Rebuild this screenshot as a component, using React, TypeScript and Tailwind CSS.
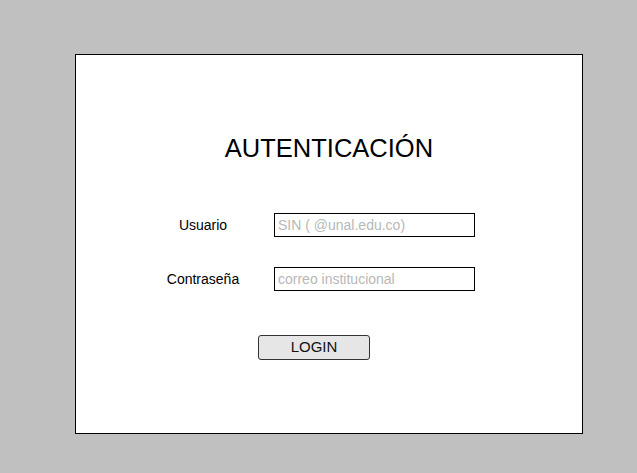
const fields = [
  { label: "Usuario", placeholder: "SIN ( @unal.edu.co)" },
  { label: "Contraseña", placeholder: "correo institucional" },
];

const App = () => {
  return (
    <div className="min-h-screen w-full bg-[#c0c0c0] pt-[54px] pl-[75px] font-['Liberation_Sans',Arial,sans-serif]">
      <div className="w-[508px] h-[380px] border border-black bg-white">
        {/* Title */}
        <h1 className="pt-[81px] text-center text-[25.5px] leading-none text-black">
          AUTENTICACIÓN
        </h1>

        {/* Form rows */}
        <div className="mt-[51px] ml-[72px] flex flex-col gap-[30px]">
          {fields.map((field) => (
            <div key={field.label} className="flex items-center gap-4">
              <label className="w-[110px] text-center text-[14px] leading-none text-black">
                {field.label}
              </label>
              <input
                type="text"
                placeholder={field.placeholder}
                className="w-[201px] h-[24px] border border-black px-[3px] text-[14px] leading-none outline-none placeholder:text-[#b8b8b8]"
              />
            </div>
          ))}
        </div>

        {/* Submit */}
        <div className="mt-[44px] ml-[182px]">
          <button className="w-[112px] h-[25px] rounded-[3px] border border-[#333333] bg-[#e6e6e6] pb-[2px] text-[15px] leading-none text-[#111111]">
            LOGIN
          </button>
        </div>
      </div>
    </div>
  );
};

export default App;
